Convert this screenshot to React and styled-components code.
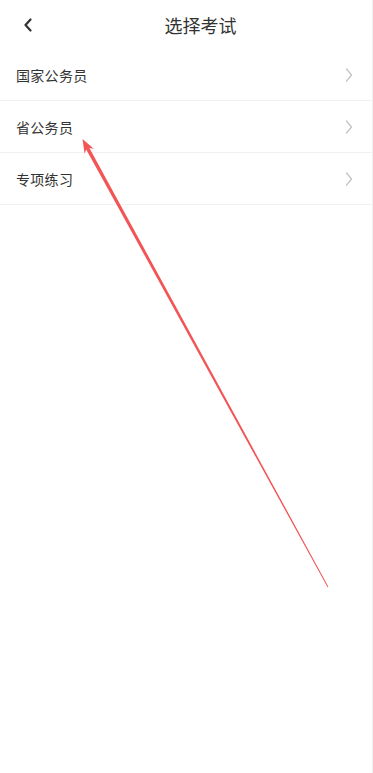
import React from "react";
import styled, { createGlobalStyle } from "styled-components";

const Global = createGlobalStyle`
  html, body { margin: 0; padding: 0; background: #ffffff; }
  body { font-family: "Noto Sans CJK SC", "Noto Sans", sans-serif; }
  * { box-sizing: border-box; }
`;

const Page = styled.div`
  position: relative;
  width: 100%;
  min-height: 773px;
  background: #ffffff;
  border-right: 1px solid #f0f0f0;
`;

const Header = styled.div`
  display: flex;
  align-items: center;
  height: 49px;
`;

const BackButton = styled.div`
  width: 56px;
  height: 49px;
  display: flex;
  align-items: center;
  justify-content: center;
  color: #333333;
`;

const Title = styled.div`
  flex: 1;
  text-align: center;
  padding-right: 27px;
  font-size: 18px;
  color: #333333;
  line-height: 24px;
`;

const List = styled.div`
  display: flex;
  flex-direction: column;
`;

const Row = styled.div`
  display: flex;
  align-items: center;
  justify-content: space-between;
  height: 52px;
  padding: 0 16px 0 16px;
  border-bottom: 1px solid #f2f2f2;
`;

const Label = styled.span`
  font-size: 14px;
  color: #333333;
  letter-spacing: 0.3px;
`;

const Chevron = styled.div`
  width: 10px;
  display: flex;
  align-items: center;
  justify-content: center;
  color: #c4c4c4;
  margin-right: 2px;
`;

const Overlay = styled.svg`
  position: absolute;
  left: 0;
  top: 0;
  pointer-events: none;
`;

const items = ["国家公务员", "省公务员", "专项练习"];

export default function App() {
  return (
    <>
      <Global />
      <Page>
        <Header>
          <BackButton>
            <svg width="10" height="14" viewBox="0 0 10 14">
              <polyline points="7.5,1.5 2.5,7 7.5,12.5" fill="none" stroke="currentColor" strokeWidth="2.2" strokeLinecap="round" strokeLinejoin="round" />
            </svg>
          </BackButton>
          <Title>选择考试</Title>
        </Header>
        <List>
          {items.map((t) => (
            <Row key={t}>
              <Label>{t}</Label>
              <Chevron>
                <svg width="8" height="14" viewBox="0 0 8 14">
                  <polyline points="1.5,1 6.5,7 1.5,13" fill="none" stroke="currentColor" strokeWidth="1.3" strokeLinecap="round" strokeLinejoin="round" />
                </svg>
              </Chevron>
            </Row>
          ))}
        </List>
        <Overlay width="373" height="773" viewBox="0 0 373 773">
          <polygon
            fill="#f25556"
            points="82.5,139 93.8,148.8 89.4,147.9 328.4,586.8 327.6,587.2 86.2,149.5 84.6,153.8"
          />
        </Overlay>
      </Page>
    </>
  );
}
